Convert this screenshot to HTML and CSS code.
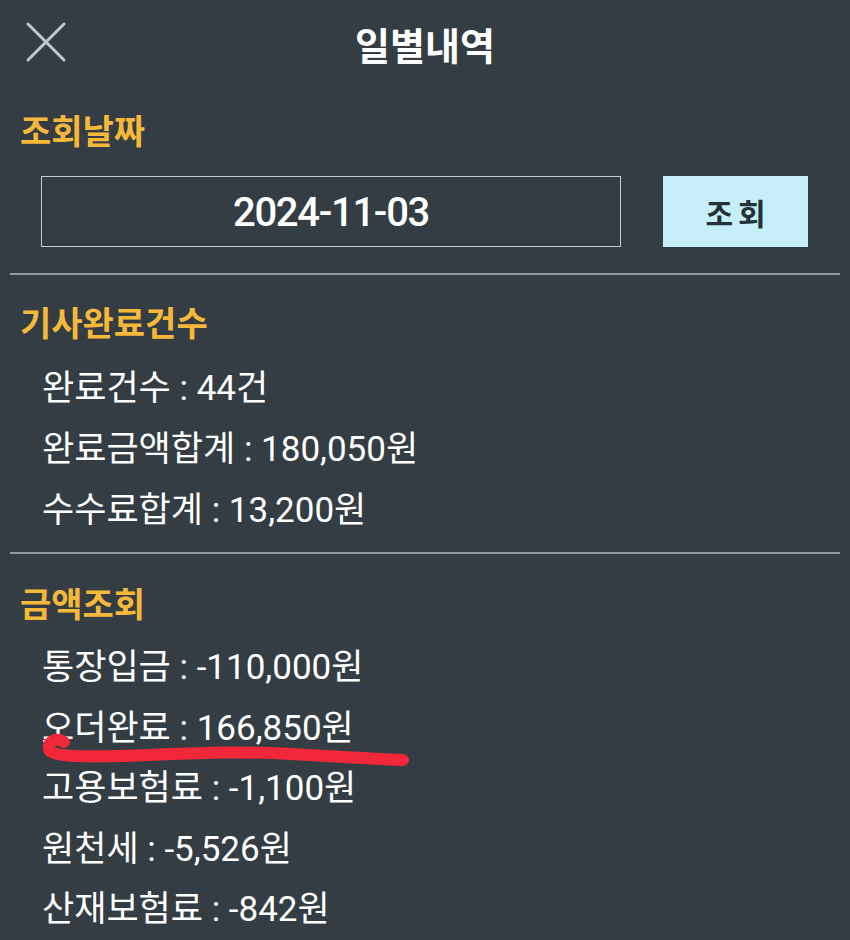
FILE: index.html
```html
<!DOCTYPE html>
<html lang="ko">
<head>
<meta charset="utf-8">
<title>일별내역</title>
<link rel="stylesheet" href="styles.css">
</head>
<body>
<div class="page">
  <header class="topbar">
    <div class="close">
      <svg width="42" height="42" viewBox="0 0 42 42"><path d="M3 3 L39 39 M39 3 L3 39" stroke="#c3c7c9" stroke-width="3" stroke-linecap="round" fill="none"/></svg>
    </div>
    <h1 class="title">일별내역</h1>
    <div></div>
  </header>

  <section class="sec sec-date">
    <h2 class="heading">조회날짜</h2>
    <div class="date-row">
      <div class="date-box">2024-11-03</div>
      <button class="btn">조회</button>
    </div>
  </section>
  <hr class="divider d1">

  <section class="sec sec-count">
    <h2 class="heading">기사완료건수</h2>
    <ul class="list l1">
      <li>완료건수 : 44건</li>
      <li>완료금액합계 : 180,050원</li>
      <li>수수료합계 : 13,200원</li>
    </ul>
  </section>
  <hr class="divider d2">

  <section class="sec sec-amount">
    <h2 class="heading">금액조회</h2>
    <ul class="list l2">
      <li>통장입금 : -110,000원</li>
      <li>오더완료 : 166,850원</li>
      <li>고용보험료 : -1,100원</li>
      <li>원천세 : -5,526원</li>
      <li>산재보험료 : -842원</li>
    </ul>
  </section>

  <svg class="scribble" width="850" height="940" viewBox="0 0 850 940">
    <path d="M43 741 L64 741" stroke="#e6e8e9" stroke-width="2" fill="none"/>
    <path d="M64 742 C56 736 45 743 50 751 C57 758 100 757 150 755 C200 753 240 751 290 754 C330 756 370 759 403 760" stroke="#f1283a" stroke-width="12" stroke-linecap="round" stroke-linejoin="round" fill="none"/>
  </svg>
</div>
</body>
</html>
```
FILE: styles.css
```css
* { box-sizing: border-box; }
html, body {
  margin: 0;
  padding: 0;
  background: #333d43;
}
body {
  font-family: Roboto, "Noto Sans CJK KR", sans-serif;
  color: #ffffff;
}
.page {
  position: relative;
  width: 850px;
  height: 940px;
  overflow: hidden;
  background: #333d43;
}
.topbar {
  height: 88px;
  display: grid;
  grid-template-columns: 1fr auto 1fr;
  align-items: center;
}
.close {
  padding-left: 25px;
  display: flex;
  align-items: center;
  margin-top: -4px;
}
.close svg { display: block; }
.title {
  margin: 0;
  font-family: "Noto Sans CJK KR", sans-serif;
  font-size: 38px;
  font-weight: 700;
  line-height: 44px;
  color: #ffffff;
}
.heading {
  margin: 0;
  padding-left: 20px;
  font-family: "Noto Sans CJK KR", sans-serif;
  font-size: 34px;
  font-weight: 700;
  line-height: 40px;
  color: #f5b838;
}
.sec-date { padding-top: 22px; }
.date-row {
  margin-top: 26px;
  padding-left: 41px;
  display: flex;
  gap: 42px;
}
.date-box {
  width: 580px;
  height: 71px;
  border: 1px solid #c9cccf;
  display: flex;
  align-items: center;
  justify-content: center;
  font-family: Roboto, sans-serif;
  font-size: 40px;
  font-weight: 500;
  letter-spacing: -1.3px;
  color: #ffffff;
  padding-top: 2px;
}
.btn {
  width: 145px;
  height: 71px;
  border: none;
  background: #c6eff9;
  font-family: "Noto Sans CJK KR", sans-serif;
  font-size: 30px;
  font-weight: 700;
  letter-spacing: 5px;
  color: #263137;
  padding: 0 0 0 5px;
}
.divider {
  margin: 0 10px;
  height: 2px;
  border: none;
  background: #8f999e;
}
.d1 { margin-top: 26px; }
.sec-count { padding-top: 27px; }
.d2 { margin-top: 11px; }
.sec-amount { padding-top: 29px; }
.list {
  list-style: none;
  margin: 0;
  padding: 0 0 0 42px;
  font-size: 35px;
  font-weight: 400;
  color: #ffffff;
}
.l1 { margin-top: 16px; }
.l1 li { line-height: 61px; height: 61px; }
.l2 { margin-top: 15px; }
.l2 li { line-height: 60.5px; height: 60.5px; }
.scribble {
  position: absolute;
  left: 0;
  top: 0;
  pointer-events: none;
}
```
